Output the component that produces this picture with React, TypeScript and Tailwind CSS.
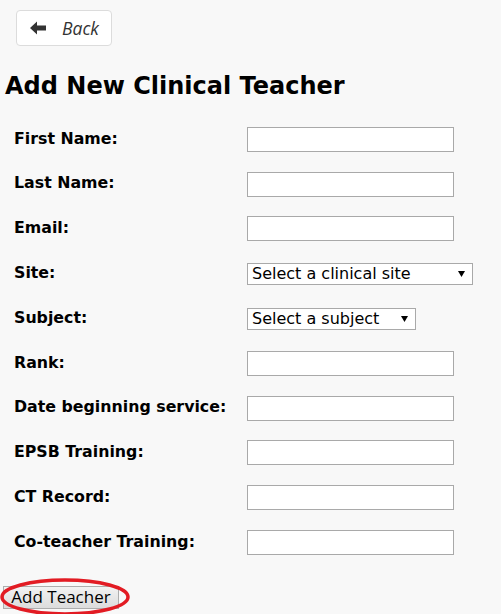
import React from "react";

const fields: { label: string; kind: "text" | "site" | "subject" }[] = [
  { label: "First Name:", kind: "text" },
  { label: "Last Name:", kind: "text" },
  { label: "Email:", kind: "text" },
  { label: "Site:", kind: "site" },
  { label: "Subject:", kind: "subject" },
  { label: "Rank:", kind: "text" },
  { label: "Date beginning service:", kind: "text" },
  { label: "EPSB Training:", kind: "text" },
  { label: "CT Record:", kind: "text" },
  { label: "Co-teacher Training:", kind: "text" },
];

function Caret() {
  return (
    <svg width="7" height="6" viewBox="0 0 7 6" className="shrink-0">
      <path d="M0 0 L7 0 L3.5 6 Z" fill="#000" />
    </svg>
  );
}

export default function App() {
  return (
    <div
      className="w-[501px] h-[614px] bg-[#f8f8f8] overflow-hidden relative text-black"
      style={{ fontFamily: '"DejaVu Sans", Verdana, sans-serif' }}
    >
      <div className="pt-[10px] pl-[16px]">
        <button className="w-[96px] h-[36px] bg-white border border-[#dcdcdc] rounded-[4px] flex items-center pl-[13px] gap-[15px] text-[#333]">
          <svg width="17" height="14" viewBox="0 0 17 14">
            <path d="M0 7 L7 0.5 L7 4.5 L16 4.5 L16 9.5 L7 9.5 L7 13.5 Z" fill="#333" />
          </svg>
          <span className="italic text-[17.5px]" style={{ fontFamily: '"Open Sans", sans-serif' }}>
            Back
          </span>
        </button>
      </div>

      <h1 className="pl-[5px] mt-[25px] text-[24px] font-bold leading-[30px]">Add New Clinical Teacher</h1>

      <div className="mt-[16px] pl-[14px] grid grid-cols-[233px_auto]">
        {fields.map((f) => (
          <React.Fragment key={f.label}>
            <div className="h-[44.8px] flex items-center font-bold text-[15.8px] pb-[2px]">{f.label}</div>
            <div className="h-[44.8px] flex items-center">
              {f.kind === "text" && (
                <div className="w-[207px] h-[25px] bg-white border border-[#a9a9a9]" />
              )}
              {f.kind === "site" && (
                <div className="w-[226px] h-[22px] bg-white border border-[#a9a9a9] flex items-center justify-between pl-[4px] pr-[7px] text-[16px]">
                  <span>Select a clinical site</span>
                  <Caret />
                </div>
              )}
              {f.kind === "subject" && (
                <div className="w-[169px] h-[22px] bg-white border border-[#a9a9a9] flex items-center justify-between pl-[4px] pr-[7px] text-[16px]">
                  <span>Select a subject</span>
                  <Caret />
                </div>
              )}
            </div>
          </React.Fragment>
        ))}
      </div>

      <div className="mt-[21px] pl-[3px] relative">
        <button
          className="h-[23px] w-[116px] border border-[#adadad] bg-gradient-to-b from-[#f2f2f2] to-[#dcdcdc] text-[17px] leading-[20px] text-black"
          style={{ fontFamily: '"Open Sans", sans-serif' }}
        >
          Add Teacher
        </button>
        <svg className="absolute left-0 top-[-9px]" width="134" height="40" viewBox="0 0 134 40">
          <ellipse cx="65" cy="20" rx="63" ry="17" fill="none" stroke="#e21b23" strokeWidth="3.5" />
        </svg>
      </div>
    </div>
  );
}
